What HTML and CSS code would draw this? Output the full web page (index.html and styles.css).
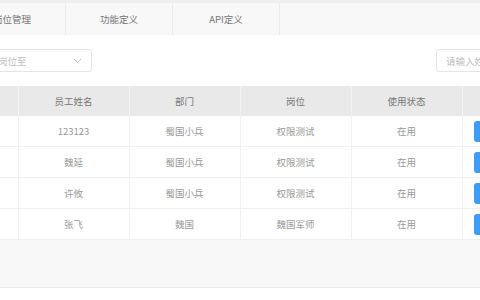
FILE: index.html
```html
<!DOCTYPE html>
<html lang="zh">

<head>
    <meta charset="UTF-8">
    <meta name="viewport" content="width=device-width, initial-scale=1.0">
    <title>岗位管理</title>
    <link rel="stylesheet" href="styles.css">
</head>

<body>
    <div class="tabs">
        <div class="tab">岗位管理</div>
        <div class="tab">功能定义</div>
        <div class="tab">API定义</div>
    </div>

    <div class="toolbar">
        <div class="select">
            <span>岗位至</span>
            <svg class="chevron" width="9" height="6" viewBox="0 0 9 6">
                <path d="M1 1 L4.5 4.5 L8 1" fill="none" stroke="#c0c4cc" stroke-width="1"/>
            </svg>
        </div>
        <div class="search">请输入姓名</div>
    </div>

    <div class="table-wrap">
        <table class="grid">
            <colgroup>
                <col class="col">
                <col class="col">
                <col class="col">
                <col class="col">
                <col class="col">
                <col class="col-op">
            </colgroup>
            <thead>
                <tr>
                    <th>编号</th>
                    <th>员工姓名</th>
                    <th>部门</th>
                    <th>岗位</th>
                    <th>使用状态</th>
                    <th>操作</th>
                </tr>
            </thead>
            <tbody>
                <tr>
                    <td>1</td>
                    <td>123123</td>
                    <td>蜀国小兵</td>
                    <td>权限测试</td>
                    <td>在用</td>
                    <td class="c-op"><span class="btn">编辑</span></td>
                </tr>
                <tr>
                    <td>2</td>
                    <td>魏延</td>
                    <td>蜀国小兵</td>
                    <td>权限测试</td>
                    <td>在用</td>
                    <td class="c-op"><span class="btn">编辑</span></td>
                </tr>
                <tr>
                    <td>3</td>
                    <td>许攸</td>
                    <td>蜀国小兵</td>
                    <td>权限测试</td>
                    <td>在用</td>
                    <td class="c-op"><span class="btn">编辑</span></td>
                </tr>
                <tr>
                    <td>4</td>
                    <td>张飞</td>
                    <td>魏国</td>
                    <td>魏国军师</td>
                    <td>在用</td>
                    <td class="c-op"><span class="btn">编辑</span></td>
                </tr>
            </tbody>
        </table>
    </div>

    <div class="pager"></div>
</body>

</html>
```

FILE: styles.css
```css
body {
    margin: 0;
    width: 480px;
    height: 300px;
    overflow: hidden;
    background: #fff;
    font-family: "Noto Sans CJK SC", "Noto Sans", sans-serif;
    font-size: 9.5px;
    color: #999;
}

.tabs {
    display: flex;
    height: 32px;
    margin-left: -41px;
    background: #f8f8f8;
    border-top: 3px solid #efefef;
}

.tab {
    width: 106px;
    line-height: 32px;
    text-align: center;
    color: #777;
    border-right: 1px solid #ebebeb;
}

.toolbar {
    display: flex;
    align-items: center;
    margin: 14px -80px 0 -13px;
}

.select,
.search {
    height: 21px;
    border: 1px solid #e4e4e4;
    border-radius: 3px;
    color: #c0c0c0;
    display: flex;
    align-items: center;
}

.select {
    width: 93px;
    padding-left: 10px;
    position: relative;
}

.chevron {
    position: absolute;
    right: 9px;
    top: 8px;
}

.search {
    margin-left: auto;
    width: 113px;
    padding-left: 9px;
}

.table-wrap {
    margin: 14px 0 0 -93px;
}

.grid {
    border-collapse: collapse;
    table-layout: fixed;
    width: 695px;
}

.col {
    width: 111px;
}

.col-op {
    width: 140px;
}

.grid th,
.grid td {
    text-align: center;
    border-right: 1px solid #f1f1f1;
    padding: 0;
}

.grid th {
    height: 30px;
    background: #e9e9e9;
    color: #777;
    font-weight: normal;
    border-right-color: #f3f3f3;
}

.grid td {
    height: 30px;
    border-bottom: 1px solid #f0f0f0;
}

.grid .c-op {
    text-align: left;
    padding-left: 11px;
}

.btn {
    display: inline-block;
    width: 40px;
    height: 21px;
    line-height: 21px;
    background: #3d9cf6;
    color: #fff;
    border-radius: 3px;
    text-align: center;
    vertical-align: middle;
}

.pager {
    height: 47px;
    background: #f8f8f8;
    border-bottom: 1px solid #ececec;
}
```
